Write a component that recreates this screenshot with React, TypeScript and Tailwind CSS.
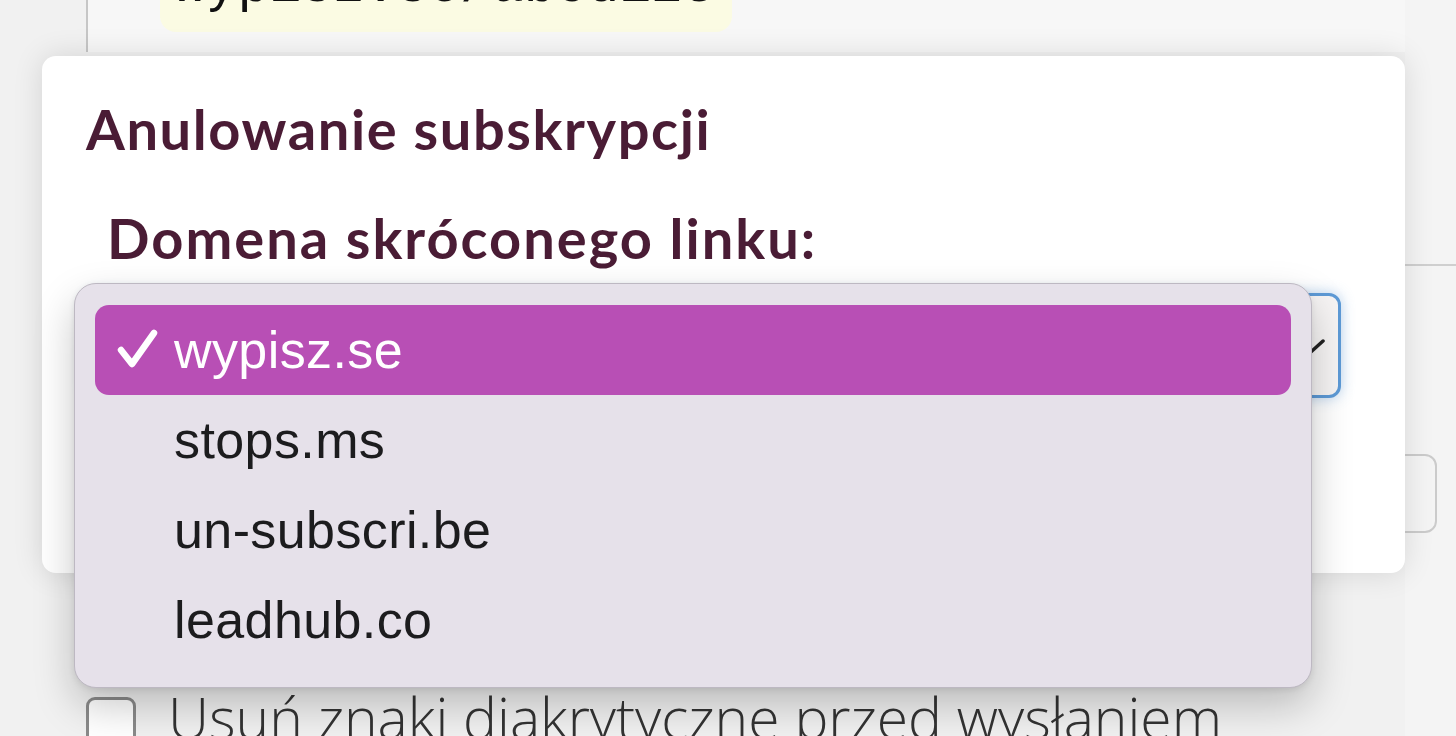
import React from "react";

const domains = ["wypisz.se", "stops.ms", "un-subscri.be", "leadhub.co"];

function Check() {
  return (
    <svg width="42" height="42" viewBox="0 0 42 42" fill="none">
      <path
        d="M5 21 L16 35 L38 4"
        stroke="white"
        strokeWidth="6.5"
        strokeLinecap="round"
        strokeLinejoin="round"
      />
    </svg>
  );
}

function DomainMenu() {
  return (
    <div className="absolute left-[32px] top-[227px] w-[1238px] h-[405px] rounded-[22px] border border-[#bdb8c2] bg-[#e6e1ea] px-[20px] py-[21px] shadow-[0_18px_40px_rgba(0,0,0,0.22),0_2px_6px_rgba(0,0,0,0.08)]">
      {domains.map((d, i) => (
        <div
          key={d}
          className={
            i === 0
              ? "flex h-[90px] items-center rounded-[14px] bg-[#b84fb5] text-white"
              : "flex h-[90px] items-center text-[#1c1c1e]"
          }
        >
          <div className="flex w-[79px] justify-center pl-[4px]">
            {i === 0 && <Check />}
          </div>
          <span className="text-[52px] leading-none tracking-[0.4px] [font-family:'Liberation_Sans',Arial,sans-serif]">
            {d}
          </span>
        </div>
      ))}
    </div>
  );
}

export default function App() {
  return (
    <div className="relative h-[736px] w-[1456px] overflow-hidden bg-[#f1f1f1] [font-family:Lato,sans-serif]">
      {/* page underneath the dialog */}
      <div className="flex h-full">
        <div className="flex w-[1405px] flex-col">
          <div className="ml-[86px] flex h-[52px] shrink-0 border-l-2 border-[#c6c6c6] bg-[#f7f7f7]">
            <div className="ml-[72px] -mt-[40px] flex h-[72px] w-[572px] items-end rounded-2xl bg-[#fbfbe3] pb-[18px] pl-[14px]">
              <span className="text-[53px] leading-none text-[#111] [font-family:'Liberation_Mono',monospace]">
                wypisz.se/abcd123
              </span>
            </div>
          </div>
          <div className="mt-[645px] ml-[86px] flex shrink-0 items-start gap-[32px]">
            <div className="h-[50px] w-[50px] shrink-0 rounded-[9px] border-[3px] border-[#8a8a8a] bg-white" />
            <span className="-mt-[12px] whitespace-nowrap text-[57px] font-light leading-[64px] text-[#333] [font-family:'Open_Sans',sans-serif]">
              Usuń znaki diakrytyczne przed wysłaniem
            </span>
          </div>
        </div>
        <div className="flex flex-1 flex-col bg-[#f4f4f4]">
          <div className="mt-[264px] border-t-2 border-[#cfcfcf]" />
          <div className="mt-[188px] -ml-[40px] h-[79px] w-[72px] rounded-xl border-2 border-[#cbcbcb]" />
        </div>
      </div>

      {/* dialog */}
      <div className="absolute left-[42px] top-[56px] h-[517px] w-[1363px] rounded-[14px] bg-white px-[44px] pt-[41px] shadow-[0_0_30px_rgba(0,0,0,0.12)]">
        <h1 className="text-[56px] font-bold leading-[64px] tracking-[1.6px] text-[#4a1c35]">
          Anulowanie subskrypcji
        </h1>
        <label className="mt-[45px] ml-[21px] block text-[56px] font-bold leading-[64px] tracking-[2px] text-[#4a1c35]">
          Domena skróconego linku:
        </label>
        <div className="mt-[23px] flex h-[105px] w-[1255px] items-center justify-end rounded-xl border-[3px] border-[#5d9ad6] bg-[#f6f4f4] pr-[13px] shadow-[0_0_14px_rgba(93,154,214,0.45)]">
          <svg width="26" height="16" viewBox="0 0 26 16" fill="none">
            <path d="M2 3 L13 13 L24 3" stroke="#222" strokeWidth="3.5" strokeLinecap="round" />
          </svg>
        </div>
        <DomainMenu />
      </div>
    </div>
  );
}
